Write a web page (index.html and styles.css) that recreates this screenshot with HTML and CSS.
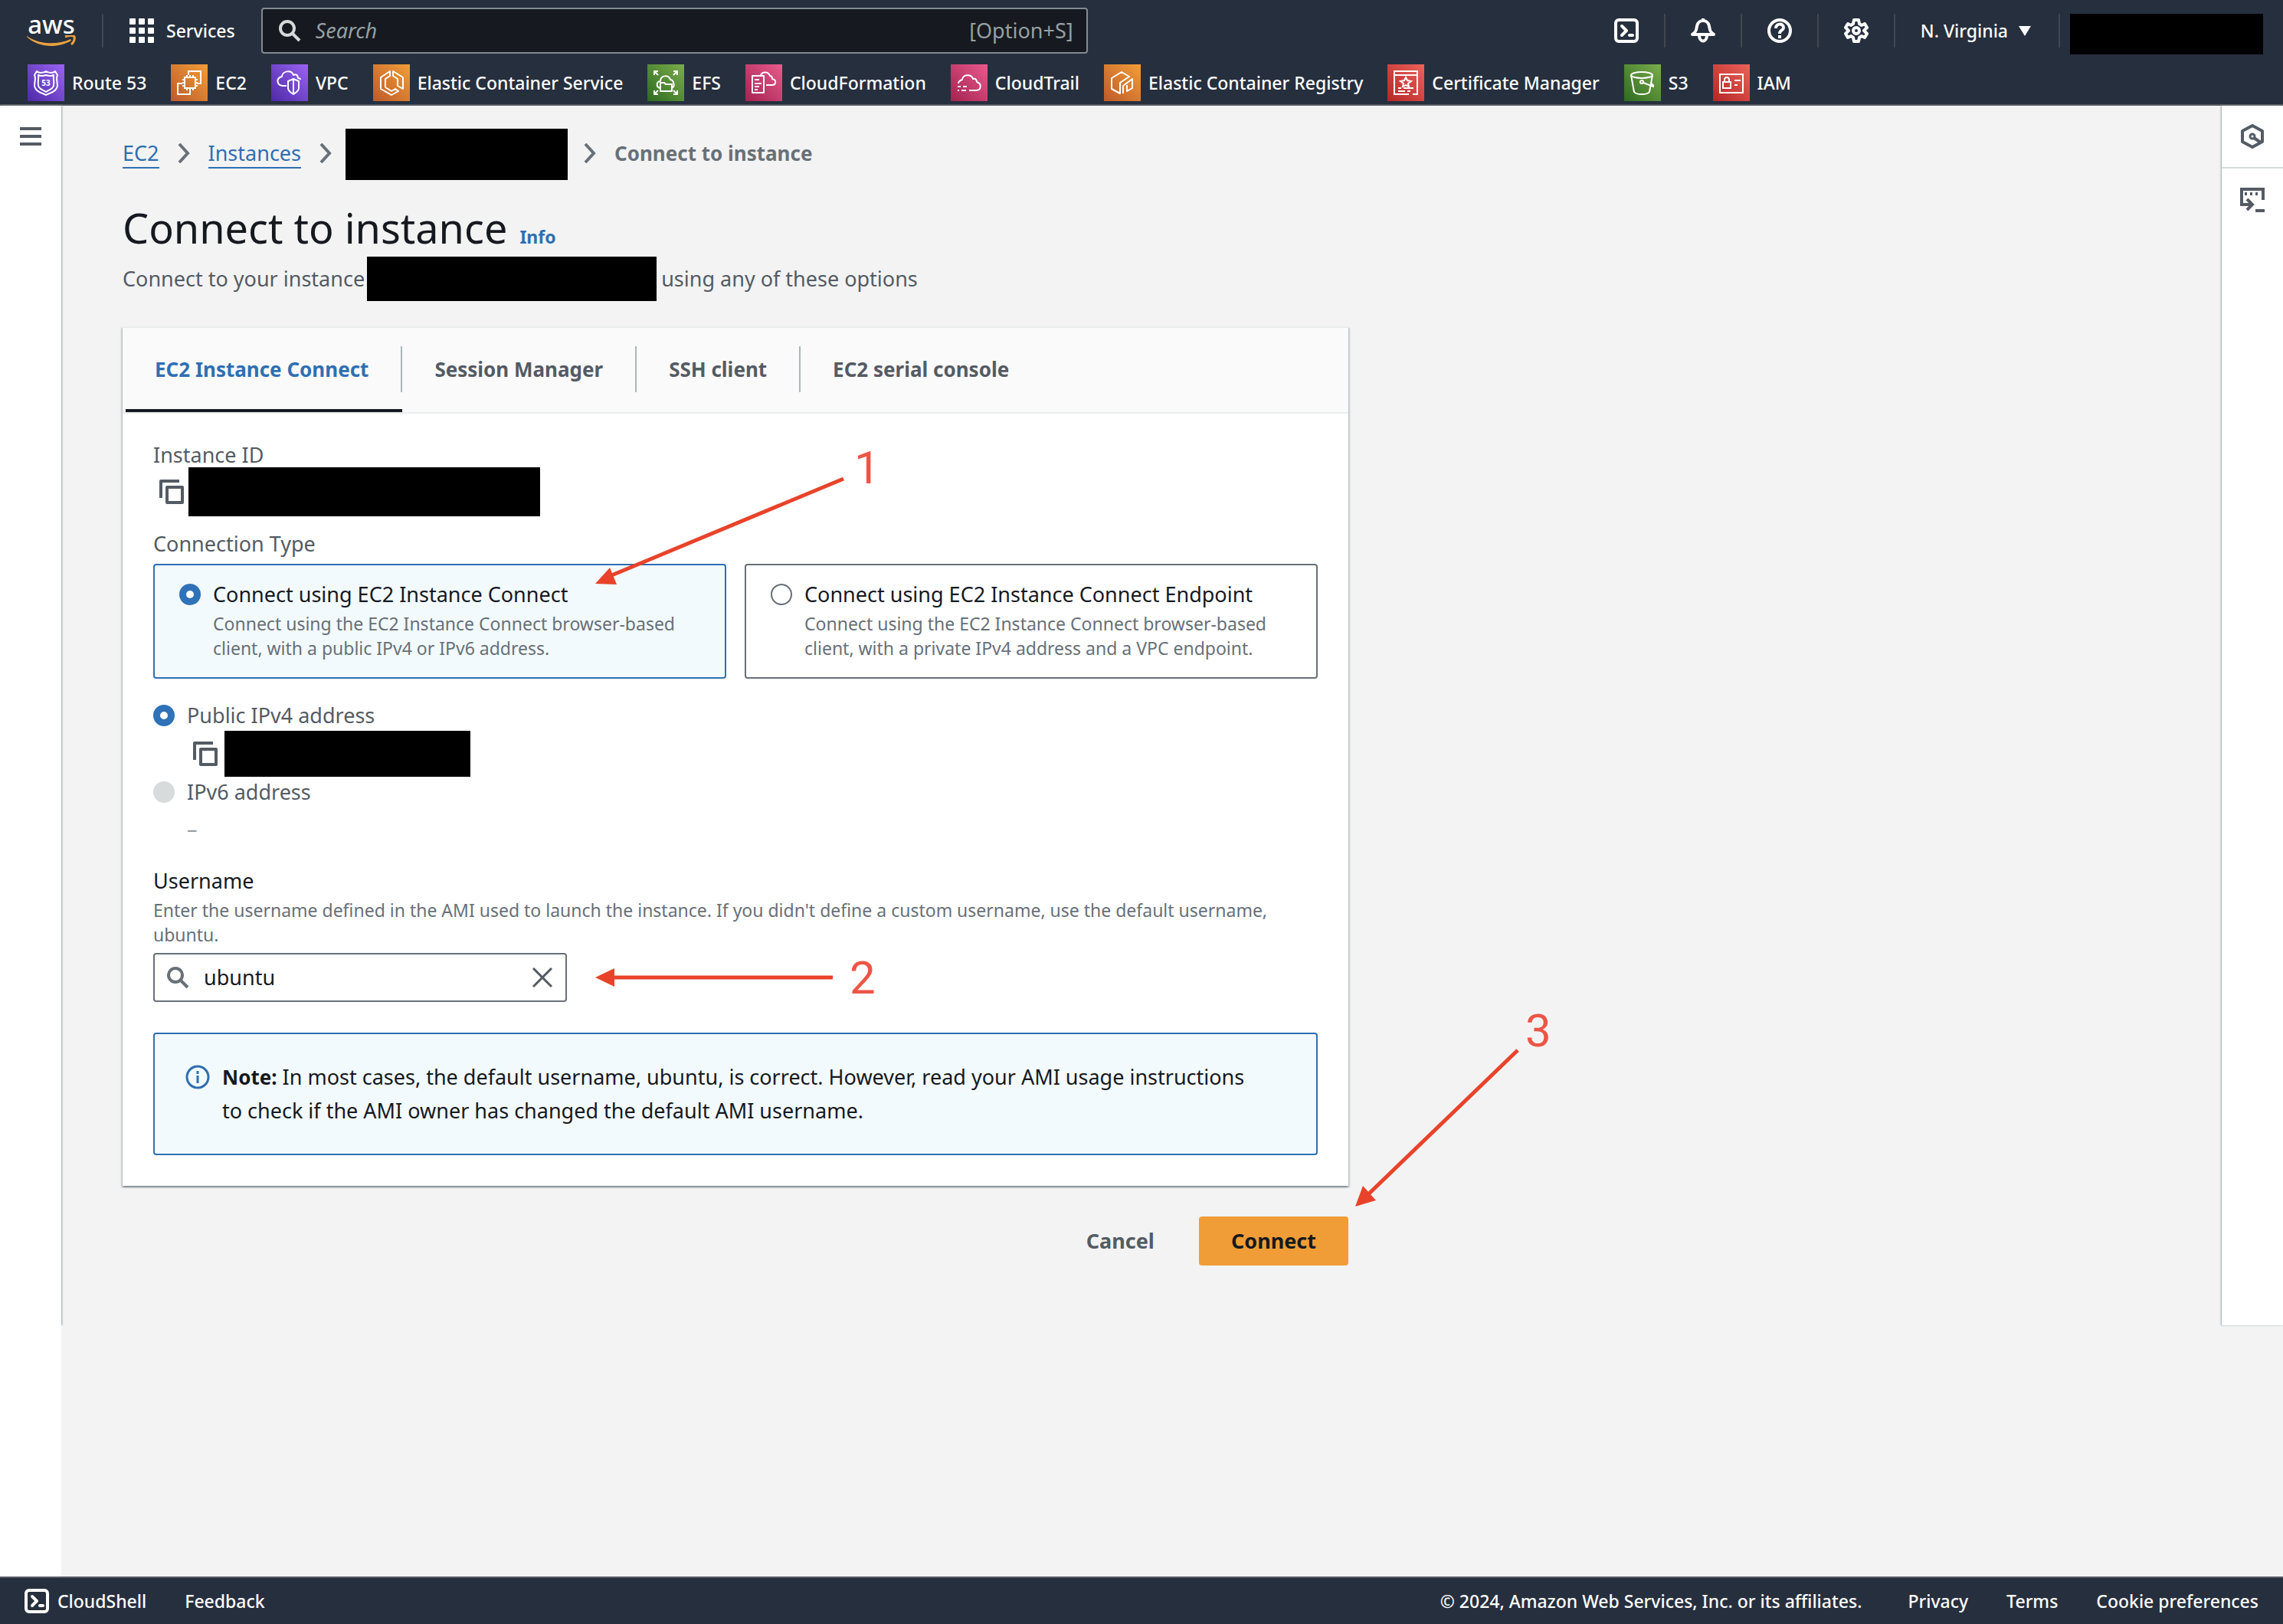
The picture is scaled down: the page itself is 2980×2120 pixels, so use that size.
FILE: index.html
```
<!DOCTYPE html>
<html lang="en">
<head>
<meta charset="utf-8">
<meta name="viewport" content="width=device-width, initial-scale=1">
<title>Connect to instance | EC2</title>
<link rel="stylesheet" href="styles.css">
</head>
<body>
<svg class="sprite" aria-hidden="true">
  <defs>
    <linearGradient id="purple" x1="0" y1="1" x2="1" y2="0"><stop offset="0" stop-color="#4d2aa5"/><stop offset="1" stop-color="#9a63f2"/></linearGradient>
    <linearGradient id="orange" x1="0" y1="1" x2="1" y2="0"><stop offset="0" stop-color="#bd5a2b"/><stop offset="1" stop-color="#f19e38"/></linearGradient>
    <linearGradient id="green" x1="0" y1="1" x2="1" y2="0"><stop offset="0" stop-color="#2f6a20"/><stop offset="1" stop-color="#7aad4c"/></linearGradient>
    <linearGradient id="pink" x1="0" y1="1" x2="1" y2="0"><stop offset="0" stop-color="#a3234f"/><stop offset="1" stop-color="#ea5a8d"/></linearGradient>
    <linearGradient id="red" x1="0" y1="1" x2="1" y2="0"><stop offset="0" stop-color="#b32725"/><stop offset="1" stop-color="#ee625c"/></linearGradient>
    <symbol id="i-shell" viewBox="0 0 32 32"><rect x="2" y="2" width="28" height="28" rx="4" fill="none" stroke="currentColor" stroke-width="4"/><path d="M10 10l6 6-6 6" fill="none" stroke="currentColor" stroke-width="4" stroke-linecap="round" stroke-linejoin="round"/><path d="M20 22h4" stroke="currentColor" stroke-width="4" stroke-linecap="round"/></symbol>
    <symbol id="i-copy" viewBox="0 0 32 32"><path d="M2 24V2h24M10 10h20v20H10z" fill="none" stroke="currentColor" stroke-width="4" stroke-linejoin="round"/></symbol>
    <symbol id="i-search" viewBox="0 0 32 32"><circle cx="13" cy="13" r="9" fill="none" stroke="currentColor" stroke-width="4"/><path d="M19 19l10 10" stroke="currentColor" stroke-width="4"/></symbol>
    <symbol id="i-chev" viewBox="0 0 16 26"><path d="M2 1l11 12L2 25" fill="none" stroke="currentColor" stroke-width="4"/></symbol>
  </defs>
</svg>

<header class="top">
  <div class="bar">
    <a class="logo" href="#" aria-label="AWS home"><span class="logo-word">aws</span>
      <svg class="smile" viewBox="0 0 64 16" aria-hidden="true"><path d="M0 1C14 11 38 14 57 5l1 2C40 18 14 16 0 2z" fill="#e9a040"/><path d="M50 2c5-2 11-2 12 0 1 3-1 8-4 10" fill="none" stroke="#e9a040" stroke-width="3"/></svg>
    </a>
    <span class="rule"></span>
    <button class="services" type="button">
      <svg class="ico" viewBox="0 0 32 32" fill="currentColor" aria-hidden="true"><rect width="8" height="8" rx="1"/><rect x="12" width="8" height="8" rx="1"/><rect x="24" width="8" height="8" rx="1"/><rect y="12" width="8" height="8" rx="1"/><rect x="12" y="12" width="8" height="8" rx="1"/><rect x="24" y="12" width="8" height="8" rx="1"/><rect y="24" width="8" height="8" rx="1"/><rect x="12" y="24" width="8" height="8" rx="1"/><rect x="24" y="24" width="8" height="8" rx="1"/></svg>
      Services
    </button>
    <label class="search">
      <svg class="ico" aria-hidden="true"><use href="#i-search"/></svg>
      <input type="search" placeholder="Search" aria-label="Search">
      <span class="hint">[Option+S]</span>
    </label>
    <div class="tools">
      <button type="button" aria-label="CloudShell"><svg class="ico" aria-hidden="true"><use href="#i-shell"/></svg></button>
      <span class="rule"></span>
      <button type="button" aria-label="Notifications"><svg class="ico" viewBox="0 0 32 32" fill="none" stroke="currentColor" stroke-width="4" stroke-linejoin="round" aria-hidden="true"><path d="M16 0v4M2 21h28c-6-4-5-7-6-11-1-5-5-7-8-7s-7 2-8 7c-1 4 0 7-6 11zM11 22c0 10 10 10 10 0"/></svg></button>
      <span class="rule"></span>
      <button type="button" aria-label="Help"><svg class="ico" viewBox="0 0 32 32" fill="none" stroke="currentColor" stroke-width="4" aria-hidden="true"><circle cx="16" cy="16" r="14"/><path d="M11 13c0-7 10-7 10-1 0 4-5 3-5 8M16 22v4"/></svg></button>
      <span class="rule"></span>
      <button type="button" aria-label="Settings"><svg class="ico" viewBox="0 0 32 32" fill="none" stroke="currentColor" stroke-width="4" stroke-linejoin="round" aria-hidden="true"><path d="M13 2h6l1 5 3 2 4-2 3 5-4 4 4 4-3 5-4-2-3 2-1 5h-6l-1-5-3-2-4 2-3-5 4-4-4-4 3-5 4 2 3-2z"/><circle cx="16" cy="16" r="4"/></svg></button>
      <span class="rule"></span>
      <button class="region" type="button">N. Virginia
        <svg class="caret" viewBox="0 0 16 13" aria-hidden="true"><path d="M0 0h16L8 13z" fill="currentColor"/></svg>
      </button>
      <span class="rule"></span>
    </div>
    <span class="mask account"></span>
  </div>
  <nav class="favs" aria-label="Favorites">
    <a href="#"><svg class="fav" viewBox="0 0 48 48" aria-hidden="true"><rect width="48" height="48" fill="url(#purple)"/><g fill="none" stroke="#fff" stroke-width="2" stroke-linejoin="round"><path d="M12 9c3 3 9 2 12 0 3 2 9 3 12 0l3 5c-3 6 2 12-1 17-3 6-9 6-14 9-5-3-11-3-14-9-3-5 2-11-1-17z"/><path d="M14 14c4 2 7 1 10 0 3 1 6 2 10 0-1 6 2 12-1 16-2 3-6 4-9 6-3-2-7-3-9-6-3-4 0-10-1-16z"/></g><text class="badge-num" x="24" y="28" text-anchor="middle">53</text></svg>Route 53</a>
    <a href="#"><svg class="fav" viewBox="0 0 48 48" aria-hidden="true"><rect width="48" height="48" fill="url(#orange)"/><g fill="none" stroke="#fff" stroke-width="2"><path d="M23 14V9h16v16h-5M15 25H9v14h16v-5M18 17h14v14H18zM21 14v3M25 14v3M29 14v3M21 31v3M25 31v3M29 31v3M15 20h3M15 24h3M15 28h3M32 20h3M32 24h3M32 28h3"/></g></svg>EC2</a>
    <a href="#"><svg class="fav" viewBox="0 0 48 48" aria-hidden="true"><rect width="48" height="48" fill="url(#purple)"/><g fill="none" stroke="#fff" stroke-width="2" stroke-linejoin="round"><path d="M20 28h-5c-8-1-9-10-1-12 0-7 12-10 15-2 4-2 6 1 6 4 2 0 3 1 3 2M29 19l7 3v9c0 4-4 6-7 8-3-2-7-4-7-8v-9zM29 19v20"/></g></svg>VPC</a>
    <a href="#"><svg class="fav" viewBox="0 0 48 48" aria-hidden="true"><rect width="48" height="48" fill="url(#orange)"/><g fill="none" stroke="#fff" stroke-width="2" stroke-linejoin="round"><path d="M22 9l-12 8v15l14 8 9-5-4-3-5 3-8-5V19l6-4zM26 9l13 8v15l-7-4V19l-6-4z"/></g></svg>Elastic Container Service</a>
    <a href="#"><svg class="fav" viewBox="0 0 48 48" aria-hidden="true"><rect width="48" height="48" fill="url(#green)"/><g fill="none" stroke="#fff" stroke-width="2" stroke-linejoin="round"><path d="M9 14V9h5M9 9l5 5M34 9h5v5M39 9l-5 5M9 34v5h5M9 39l5-5M34 39h5v-5M39 39l-5-5M16 31c-5-2-4-9 1-9 0-8 11-9 13-2 4 0 7 9 2 11M17 35V24h5l2 2h8v9z"/></g></svg>EFS</a>
    <a href="#"><svg class="fav" viewBox="0 0 48 48" aria-hidden="true"><rect width="48" height="48" fill="url(#pink)"/><g fill="none" stroke="#fff" stroke-width="2" stroke-linejoin="round"><path d="M9 15h15v22H9zM12 20h6M12 25h9M12 29h6M12 33h4M20 15c1-6 10-6 12 0 3 0 3 2 3 4 6 1 5 8 0 8h-8"/></g></svg>CloudFormation</a>
    <a href="#"><svg class="fav" viewBox="0 0 48 48" aria-hidden="true"><rect width="48" height="48" fill="url(#pink)"/><g fill="none" stroke="#fff" stroke-width="2" stroke-linejoin="round"><path d="M10 25c0-3 2-4 5-5 0-7 12-8 14-1 4-1 5 2 5 4 7 2 6 11-1 11h-9M9 29h4M16 29h5M9 34h2M14 34h6"/></g></svg>CloudTrail</a>
    <a href="#"><svg class="fav" viewBox="0 0 48 48" aria-hidden="true"><rect width="48" height="48" fill="url(#orange)"/><g fill="none" stroke="#fff" stroke-width="2" stroke-linejoin="round"><path d="M21 38l-11-6V18l13-8 10 6-12 8zM25 38V28l12-9v12l-7 4v-8"/></g></svg>Elastic Container Registry</a>
    <a href="#"><svg class="fav" viewBox="0 0 48 48" aria-hidden="true"><rect width="48" height="48" fill="url(#red)"/><g fill="none" stroke="#fff" stroke-width="2"><path d="M28 39H9V9h30v30h-6M9 14h30M14 31h4M21 31h13M14 35h9M26 35h4"/><path d="M24 17l2 4 5 1-4 3 1 4-4-2-4 2 1-4-4-3 5-1z"/></g></svg>Certificate Manager</a>
    <a href="#"><svg class="fav" viewBox="0 0 48 48" aria-hidden="true"><rect width="48" height="48" fill="url(#green)"/><g fill="none" stroke="#fff" stroke-width="2"><ellipse cx="23" cy="14" rx="14" ry="4"/><path d="M9 14l4 22c3 4 17 4 20 0l4-22M25 24l13 5c1-2-1-3-3-4"/><circle cx="23" cy="23" r="2"/></g></svg>S3</a>
    <a href="#"><svg class="fav" viewBox="0 0 48 48" aria-hidden="true"><rect width="48" height="48" fill="url(#red)"/><g fill="none" stroke="#fff" stroke-width="2"><path d="M9 13h30v24H9zM13 23h10v8H13zM15 23v-3c0-4 6-4 6 0v3M28 21h8M28 27h4"/></g></svg>IAM</a>
  </nav>
</header>

<div class="workspace">
  <aside class="side left">
    <button class="menu" type="button" aria-label="Open navigation"><span></span><span></span><span></span></button>
  </aside>
  <main class="main">
    <div class="content">
      <nav aria-label="Breadcrumb">
        <ol class="crumbs">
          <li><a href="#">EC2</a></li>
          <li class="sep"><svg aria-hidden="true"><use href="#i-chev"/></svg></li>
          <li><a href="#">Instances</a></li>
          <li class="sep"><svg aria-hidden="true"><use href="#i-chev"/></svg></li>
          <li class="mask crumb-mask"></li>
          <li class="sep"><svg aria-hidden="true"><use href="#i-chev"/></svg></li>
          <li class="here">Connect to instance</li>
        </ol>
      </nav>
      <div class="title"><h1>Connect to instance</h1><a href="#">Info</a></div>
      <p class="lead">Connect to your instance<span class="mask lead-mask"></span>using any of these options</p>

      <section class="card">
        <div class="tabs" role="tablist">
          <button class="tab active" role="tab" aria-selected="true" type="button"><span>EC2 Instance Connect</span></button>
          <button class="tab" role="tab" aria-selected="false" type="button"><span>Session Manager</span></button>
          <button class="tab" role="tab" aria-selected="false" type="button"><span>SSH client</span></button>
          <button class="tab" role="tab" aria-selected="false" type="button"><span>EC2 serial console</span></button>
        </div>
        <form class="body" id="connect-form">
          <div class="label">Instance ID</div>
          <div class="value"><button class="copy" type="button" aria-label="Copy instance ID"><svg class="ico" aria-hidden="true"><use href="#i-copy"/></svg></button><span class="mask id-mask"></span></div>
          <div class="label type-label">Connection Type</div>
          <div class="tiles">
            <label class="tile selected">
              <input type="radio" name="type" checked>
              <span><span class="tile-title">Connect using EC2 Instance Connect</span><span class="note-text">Connect using the EC2 Instance Connect browser-based client, with a public IPv4 or IPv6 address.</span></span>
            </label>
            <label class="tile">
              <input type="radio" name="type">
              <span><span class="tile-title">Connect using EC2 Instance Connect Endpoint</span><span class="note-text">Connect using the EC2 Instance Connect browser-based client, with a private IPv4 address and a VPC endpoint.</span></span>
            </label>
          </div>
          <div class="addresses">
            <label class="option"><input type="radio" name="address" checked>Public IPv4 address</label>
            <div class="address-value"><button class="copy" type="button" aria-label="Copy public IPv4 address"><svg class="ico" aria-hidden="true"><use href="#i-copy"/></svg></button><span class="mask ip-mask"></span></div>
            <label class="option"><input type="radio" name="address" disabled>IPv6 address</label>
            <div class="empty">–</div>
          </div>
          <label class="field-label" for="username">Username</label>
          <p class="note-text">Enter the username defined in the AMI used to launch the instance. If you didn't define a custom username, use the default username, ubuntu.</p>
          <div class="field">
            <svg class="ico" aria-hidden="true"><use href="#i-search"/></svg>
            <input id="username" type="text" value="ubuntu">
            <button type="button" aria-label="Clear"><svg viewBox="0 0 26 26" aria-hidden="true"><path d="M1 1l24 24M25 1L1 25" stroke="currentColor" stroke-width="3"/></svg></button>
          </div>
          <div class="alert">
            <svg class="ico" viewBox="0 0 32 32" fill="none" stroke="currentColor" stroke-width="3" aria-hidden="true"><circle cx="16" cy="16" r="14"/><path d="M16 8v4M16 14v10"/></svg>
            <p><strong>Note:</strong> In most cases, the default username, ubuntu, is correct. However, read your AMI usage instructions to check if the AMI owner has changed the default AMI username.</p>
          </div>
        </form>
      </section>
      <div class="actions">
        <button class="cancel" type="button">Cancel</button>
        <button class="connect" type="submit" form="connect-form">Connect</button>
      </div>

      <svg class="marks" width="2000" height="1500" viewBox="0 0 2000 1500">
        <g stroke="#e8432a" stroke-width="5" fill="#e8432a">
          <path d="M941 457L636 584"/><path d="M617 594l19-21 9 22z" stroke="none"/>
          <path d="M927 1108H640"/><path d="M617 1108l25-12v24z" stroke="none"/>
          <path d="M1821 1203L1625 1392"/><path d="M1609 1407l10-27 17 19z" stroke="none"/>
        </g>
        <g class="digits"><text x="955" y="463">1</text><text x="949" y="1129">2</text><text x="1831" y="1198">3</text></g>
      </svg>
    </div>
  </main>
  <aside class="side right">
    <button type="button" aria-label="Tutorials"><svg class="ico" viewBox="0 0 32 32" fill="none" stroke="currentColor" stroke-width="4" stroke-linejoin="round" aria-hidden="true"><path d="M16 2l13 7v14l-13 7-13-7V9z"/><circle cx="16" cy="16" r="3" stroke-width="3"/><path d="M18 18l9 6"/></svg></button>
    <button type="button" aria-label="Shell panel"><svg class="ico" viewBox="0 0 32 32" fill="none" stroke="currentColor" stroke-width="4" aria-hidden="true"><path d="M30 16V2H2v20h14M9 15l7 7-7 7M20 30h12M6 8h3M13 8h3M20 8h3"/></svg></button>
  </aside>
</div>
<div class="below"></div>

<footer class="foot">
  <a class="shell" href="#"><svg class="ico" aria-hidden="true"><use href="#i-shell"/></svg>CloudShell</a>
  <a href="#">Feedback</a>
  <span class="legal">© 2024, Amazon Web Services, Inc. or its affiliates.</span>
  <a href="#">Privacy</a>
  <a href="#">Terms</a>
  <a href="#">Cookie preferences</a>
</footer>
</body>
</html>
```
FILE: styles.css
```
* { box-sizing: border-box; }
body {
  margin: 0;
  min-height: 100vh;
  display: flex;
  flex-direction: column;
  background: #f3f3f3;
  color: #16191f;
  font: 27px/40px "Noto Sans", sans-serif;
}
h1, p, ol { margin: 0; padding: 0; font-weight: 400; }
button {
  padding: 0;
  border: 0;
  background: none;
  color: inherit;
  font: inherit;
  cursor: pointer;
}
button svg { display: block; }
a { color: #2f6fb2; text-decoration: none; }
.sprite { position: absolute; width: 0; height: 0; }
.ico { width: 32px; height: 32px; flex: none; display: block; }
.mask { background: #000; flex: none; }

/* Header */
.top { background: #262f3e; border-bottom: 2px solid #57595e; color: #fff; font-size: 23px; font-weight: 500; }
.bar { display: flex; align-items: center; height: 80px; padding: 0 26px 0 35px; gap: 34px; }
.rule { width: 2px; height: 44px; background: #414750; flex: none; }
.logo { display: block; width: 64px; height: 44px; color: #fff; text-align: center; }
.logo-word { display: block; font-size: 33px; line-height: 28px; height: 28px; }
.smile { display: block; width: 64px; height: 16px; }
.services { display: flex; align-items: center; gap: 16px; }
.search {
  display: flex;
  align-items: center;
  flex: 0 1 1079px;
  height: 60px;
  padding: 0 17px 0 19px;
  border: 2px solid #828b92;
  border-radius: 4px;
  background: #16191f;
  color: #d5d9d9;
  font-size: 27px;
  font-weight: 400;
}
.search input {
  flex: 1;
  min-width: 0;
  margin-left: 18px;
  padding: 0;
  border: 0;
  outline: 0;
  background: none;
  color: #fff;
  font: inherit;
}
.search input::placeholder { color: #95a0a2; font-style: italic; opacity: 1; }
.hint { color: #95a0a2; }
.tools { display: flex; align-items: center; gap: 33px; margin-left: auto; }
.region { display: flex; align-items: center; gap: 14px; padding-right: 3px; }
.caret { width: 16px; height: 13px; }
.account { width: 252px; height: 53px; margin: 8px 0 0 -21px; }
.favs { display: flex; flex-wrap: wrap; gap: 4px 32px; padding: 4px 36px; }
.favs a { display: flex; align-items: center; gap: 10px; color: #fff; }
.fav { width: 48px; height: 48px; display: block; }
.badge-num { fill: #fff; font-size: 10px; font-weight: 700; }

/* Page frame */
.workspace { display: flex; }
.side { width: 80px; flex: none; background: #fff; color: #545b64; }
.left { box-shadow: 1px 0 2px #9aa5ab; }
.right { box-shadow: -1px 0 2px #9aa5ab; }
.menu { display: flex; flex-direction: column; gap: 6px; width: 28px; margin: 28px 26px; }
.menu span { height: 4px; background: #545b64; }
.right button { display: grid; place-items: center; width: 80px; height: 82px; }
.right button:first-child { border-bottom: 2px solid #d5dbdb; }
.main { flex: 1; min-width: 0; padding: 30px 80px 78px; }
.content { position: relative; max-width: 1600px; }
.below { flex: 1; border-left: 80px solid #fff; }

/* Page heading */
.crumbs { display: flex; height: 67px; list-style: none; line-height: 64px; }
.crumbs a { border-bottom: 2px solid #2f6fb2; }
.sep { margin: 0 24px; color: #687078; }
.sep svg { display: block; width: 16px; height: 26px; margin-top: 19px; }
.crumb-mask { width: 290px; margin: 0 -3px 0 -6px; }
.here { color: #687078; font-size: 26px; font-weight: 700; }
.title { display: flex; align-items: baseline; gap: 16px; margin-top: 28px; }
.title h1 { font-size: 54px; line-height: 68px; }
.title a { font-size: 23px; font-weight: 700; }
.lead { display: flex; align-items: center; height: 58px; margin-top: 4px; color: #545b64; }
.lead-mask { width: 378px; height: 58px; margin: 0 6px 0 3px; }

/* Card and tabs */
.card {
  margin-top: 33px;
  border-top: 2px solid #eaeded;
  background: #fff;
  box-shadow: 0 2px 2px rgba(0, 28, 36, .3), 2px 2px 2px rgba(0, 28, 36, .15), -2px 2px 2px rgba(0, 28, 36, .15);
}
.tabs { display: flex; background: #fafafa; border-bottom: 2px solid #eaeded; padding-left: 4px; }
.tab { padding: 24px 0 22px; border-bottom: 4px solid transparent; color: #545b64; font-size: 26px; font-weight: 700; }
.tab span { display: block; padding: 0 42px; line-height: 60px; border-right: 2px solid #aab7b8; }
.tab:first-child span { padding-left: 38px; }
.tab:last-child span { border-right: 0; }
.active { color: #2f6fb2; border-bottom-color: #16191f; }
.body { padding: 38px 40px 40px; }
.label { color: #545b64; line-height: 32px; }
.value { display: flex; align-items: center; gap: 6px; height: 64px; padding-left: 8px; }
.copy { color: #545b64; }
.id-mask { width: 459px; height: 64px; }
.type-label { margin-top: 20px; }

/* Radios and tiles */
input[type="radio"] {
  appearance: none;
  flex: none;
  width: 28px;
  height: 28px;
  margin: 0;
  border: 2px solid #687078;
  border-radius: 50%;
  background: #fff;
}
input[type="radio"]:checked { border: 9px solid #2f72b8; }
input[type="radio"]:disabled { border: 0; background: #d8dbdc; }
.tiles { display: grid; grid-template-columns: 1fr 1fr; gap: 24px; margin-top: 10px; }
.tile { display: flex; gap: 16px; padding: 18px 32px 22px; border: 2px solid #687078; border-radius: 4px; }
.tile input { margin-top: 6px; }
.selected { border-color: #2f6fb2; background: #f2fafd; }
.tile-title { display: block; margin-bottom: 2px; }
.note-text { display: block; color: #687078; font-size: 23px; line-height: 32px; }
.addresses { margin: 28px 0; color: #545b64; }
.option { display: flex; align-items: center; gap: 16px; }
.address-value { display: flex; align-items: center; gap: 9px; height: 60px; padding-left: 52px; }
.ip-mask { width: 321px; height: 60px; }
.empty { margin: 8px 0 0 44px; color: #9a9fa3; }

/* Username field */
.field-label { display: block; margin-bottom: 2px; }
.field {
  display: flex;
  align-items: center;
  max-width: 540px;
  height: 64px;
  margin-top: 8px;
  padding: 0 17px 0 14px;
  border: 2px solid #687078;
  border-radius: 4px;
  color: #687078;
}
.field input {
  flex: 1;
  min-width: 0;
  margin-left: 18px;
  padding: 0;
  border: 0;
  outline: 0;
  background: none;
  color: #16191f;
  font: inherit;
}
.field button { color: #545b64; }
.field button svg { width: 26px; height: 26px; }
.alert {
  display: flex;
  gap: 16px;
  margin-top: 40px;
  padding: 34px 80px 34px 40px;
  border: 2px solid #2f6fb2;
  border-radius: 4px;
  background: #f2fafd;
  line-height: 44px;
}
.alert .ico { margin-top: 6px; color: #2f6fb2; }
.alert strong { font-size: 26px; }

/* Form actions */
.actions { display: flex; justify-content: flex-end; gap: 18px; margin-top: 40px; font-weight: 700; }
.cancel { padding: 0 40px; color: #545b64; }
.connect { height: 64px; padding: 0 42px; border-radius: 4px; background: #f09d37; }

/* Numbered step markers drawn over the page */
.marks { position: absolute; top: 0; left: 0; pointer-events: none; }
.digits { fill: #ec5545; font: 60px Roboto, sans-serif; }

/* Footer */
.foot {
  display: flex;
  align-items: center;
  gap: 50px;
  height: 62px;
  padding: 0 32px;
  border-top: 2px solid #545b64;
  background: #262f3e;
  color: #fff;
  font-size: 23px;
  font-weight: 500;
}
.foot a { color: #fff; }
.shell { display: flex; align-items: center; gap: 11px; }
.legal { margin: 0 10px 0 auto; }
```
